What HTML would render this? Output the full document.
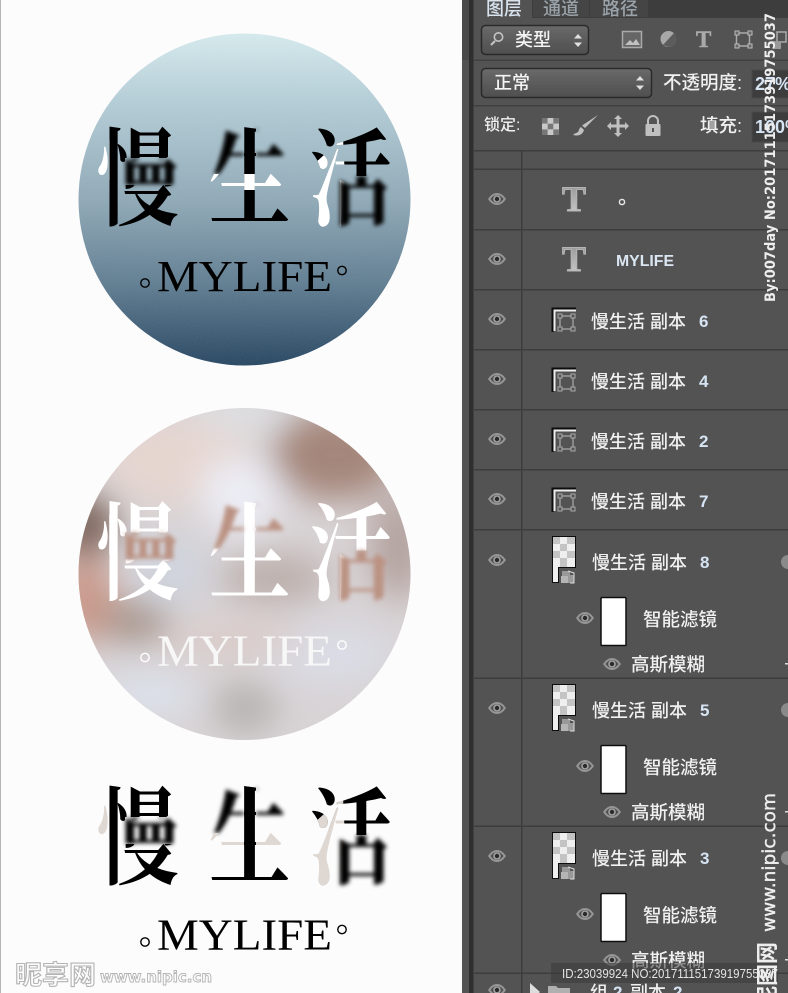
<!DOCTYPE html>
<html lang="zh">
<head>
<meta charset="utf-8">
<title>慢生活 MYLIFE</title>
<style>
html,body{margin:0;padding:0;background:#fcfcfc;width:788px;height:993px;overflow:hidden}
svg{display:block}
.cn{font-family:"Liberation Serif","Noto Serif CJK SC",serif;font-weight:700;font-size:106px}
.en{font-family:"Liberation Serif",serif;font-size:44px}
.ui{font-family:"Liberation Sans","Noto Sans CJK SC",sans-serif;font-size:18px;font-weight:500;fill:#f0f0f0}
.num{font-family:"Liberation Sans",sans-serif;font-size:17px;font-weight:700;fill:#d5e3f2}
.wm{font-family:"DejaVu Sans",sans-serif;font-weight:700;fill:#eee}
</style>
</head>
<body>
<svg width="788" height="993" viewBox="0 0 788 993" xmlns="http://www.w3.org/2000/svg">
<defs>
<linearGradient id="g1" x1="0" y1="0" x2="0" y2="1">
<stop offset="0" stop-color="#d8eef1"/><stop offset=".2" stop-color="#b6d0da"/><stop offset=".5" stop-color="#8faab8"/><stop offset=".75" stop-color="#5f7d92"/><stop offset="1" stop-color="#234360"/>
</linearGradient>
<linearGradient id="sel" x1="0" y1="0" x2="0" y2="1"><stop offset="0" stop-color="#6a6a6a"/><stop offset="1" stop-color="#4e4e4e"/></linearGradient>
<linearGradient id="tg" x1="0" y1="0" x2="0" y2="1"><stop offset="0" stop-color="#8f8f8f"/><stop offset="1" stop-color="#d0d0d0"/></linearGradient>
<filter id="b2" x="-30%" y="-30%" width="160%" height="160%"><feGaussianBlur stdDeviation="2"/></filter>
<filter id="bg" x="-60%" y="-60%" width="220%" height="220%"><feGaussianBlur stdDeviation="17"/></filter>
<filter id="soft" x="-5%" y="-5%" width="110%" height="110%"><feGaussianBlur stdDeviation=".35"/></filter>
<filter id="noise" x="0" y="0" width="100%" height="100%"><feTurbulence type="fractalNoise" baseFrequency=".9" numOctaves="2"/><feColorMatrix values="0 0 0 0 .5 0 0 0 0 .5 0 0 0 0 .5 0 0 0 .35 0"/></filter>
<clipPath id="cc1"><circle cx="244.5" cy="199.5" r="166"/></clipPath>
<clipPath id="cc2"><circle cx="244.5" cy="574" r="166"/></clipPath>

<clipPath id="mA"><rect x="90" y="140" width="19.5" height="40"/></clipPath>
<clipPath id="mS"><path d="M109.5 120H182V158H125V185H182V232H109.5Z"/></clipPath>
<clipPath id="mB"><rect x="125" y="158" width="57" height="27"/></clipPath>
<clipPath id="sB"><path d="M200 120H244V174H200ZM256 120H296V174H256Z"/></clipPath>
<clipPath id="sS"><path d="M244 120H256V190H296V232H200V190H244Z"/></clipPath>
<clipPath id="sA"><rect x="200" y="174" width="96" height="16"/></clipPath>
<clipPath id="sV"><rect x="244" y="120" width="12" height="110"/></clipPath>
<clipPath id="hS"><path d="M305 120H341L341 143L326 176L305 176ZM341 120H396V176H341Z"/></clipPath>
<clipPath id="hA"><path d="M343 138L345 178L340 232H305V172Z"/></clipPath>
<clipPath id="hB"><rect x="339" y="176" width="56" height="54"/></clipPath>

<symbol id="eye" viewBox="0 0 20 14"><path d="M1 7C4 2.5 7 1 10 1s6 1.500 9 6c-3 4.500-6 6-9 6S4 11.500 1 7Z" fill="#969696"/><path d="M3.500 7C5.500 4 8 3 10 3s4.500 1 6.500 4c-2 3-4.500 4-6.500 4s-4.500-1-6.500-4Z" fill="#505050"/><circle cx="10" cy="7" r="3.800" fill="#a2a2a2"/><circle cx="10" cy="7" r="2.200" fill="#2c2c2c"/></symbol>
<symbol id="shape" viewBox="0 0 26 26"><path d="M1.500 25V1.500H25" fill="none" stroke="#111" stroke-width="2"/><path d="M3.500 24V3.500H25" fill="none" stroke="#eee" stroke-width="2"/><rect x="9" y="9" width="13" height="13" fill="none" stroke="#999" stroke-width="1.500"/><g fill="#555" stroke="#aaa"><rect x="7" y="7" width="4" height="4"/><rect x="20" y="7" width="4" height="4"/><rect x="7" y="20" width="4" height="4"/><rect x="20" y="20" width="4" height="4"/></g></symbol>
<symbol id="smart" viewBox="0 0 26 49"><path d="M1 1H25V33H8V48H1Z" fill="#111"/><rect x="2" y="2" width="22" height="30" fill="#efefef"/><rect x="2" y="32" width="5" height="15" fill="#efefef"/><g fill="#c4c4c4"><rect x="2" y="2" width="7" height="7"/><rect x="16" y="2" width="8" height="7"/><rect x="9" y="9" width="7" height="7"/><rect x="2" y="16" width="7" height="7"/><rect x="16" y="16" width="8" height="7"/><rect x="9" y="23" width="7" height="9"/></g><path d="M11 36h8v4h4v8h-10v-4h-2z" fill="#999"/><path d="M17 36l6 2v10h-4" fill="none" stroke="#ddd" stroke-width="1"/><rect x="10" y="41" width="7" height="7" fill="#b5b5b5"/></symbol>
</defs>

<!-- left page -->
<rect width="788" height="993" fill="#fcfcfc"/>
<rect x="0" y="0" width="1" height="993" fill="#b5b5b5"/>

<!-- circle 1 -->
<circle cx="244.5" cy="199.5" r="166" fill="url(#g1)"/>
<g clip-path="url(#cc1)"><rect x="78" y="33" width="334" height="334" filter="url(#noise)" opacity=".45"/></g>

<!-- logo 1 -->
<g>
<g clip-path="url(#mS)"><text class="cn" transform="translate(97,217) scale(.77,1)">慢</text></g>
<g clip-path="url(#mA)"><text class="cn" fill="#fff" transform="translate(97,217) scale(.77,1)">慢</text></g>
<g filter="url(#b2)"><g clip-path="url(#mB)"><text class="cn" transform="translate(97,217) scale(.77,1)">慢</text></g></g>
<g filter="url(#b2)"><g clip-path="url(#sB)"><text class="cn" transform="translate(209,217) scale(.77,1)">生</text></g></g>
<g clip-path="url(#sS)"><text class="cn" transform="translate(209,217) scale(.77,1)">生</text></g>
<g clip-path="url(#sA)"><text class="cn" fill="#fff" transform="translate(209,217) scale(.77,1)">生</text></g>
<g clip-path="url(#hS)"><text class="cn" transform="translate(310,217) scale(.77,1)">活</text></g>
<g clip-path="url(#hA)"><text class="cn" fill="#fff" transform="translate(310,217) scale(.77,1)">活</text></g>
<g filter="url(#b2)"><g clip-path="url(#hB)"><text class="cn" transform="translate(310,217) scale(.77,1)">活</text></g></g>
<text class="en" x="157" y="291" textLength="175" lengthAdjust="spacingAndGlyphs">MYLIFE</text>
<circle cx="145" cy="283" r="4.200" fill="none" stroke="#000" stroke-width="1.400"/>
<circle cx="342" cy="270.500" r="4.200" fill="none" stroke="#000" stroke-width="1.400"/>
</g>

<!-- circle 2 -->
<circle cx="244.5" cy="574" r="166" fill="#d8d3d5"/>
<g clip-path="url(#cc2)">
<g filter="url(#bg)">
<ellipse cx="335" cy="455" rx="62" ry="45" fill="#a4867a"/>
<ellipse cx="180" cy="462" rx="75" ry="42" fill="#e6d6d0"/>
<ellipse cx="240" cy="495" rx="40" ry="38" fill="#ecedf5"/>
<ellipse cx="85" cy="525" rx="32" ry="32" fill="#7a6258"/>
<ellipse cx="85" cy="600" rx="32" ry="42" fill="#cb9a8b"/>
<ellipse cx="135" cy="622" rx="34" ry="20" fill="#a49288"/>
<ellipse cx="245" cy="708" rx="32" ry="24" fill="#b4b0ad"/>
<ellipse cx="150" cy="695" rx="50" ry="24" fill="#dce1ea"/>
<ellipse cx="398" cy="545" rx="28" ry="55" fill="#b3a29e"/>
<ellipse cx="330" cy="655" rx="65" ry="30" fill="#dadce5"/>
<ellipse cx="275" cy="578" rx="55" ry="24" fill="#bbaeaa"/>
<ellipse cx="170" cy="570" rx="40" ry="35" fill="#d0d4dd"/>
<ellipse cx="240" cy="415" rx="50" ry="12" fill="#dfe4e8"/>
<ellipse cx="235" cy="640" rx="70" ry="12" fill="#dcc9c4"/>
</g>
</g>

<!-- logo 2 -->
<g transform="translate(0,374.500)">
<g fill="#fff">
<g clip-path="url(#mS)"><text class="cn" transform="translate(97,217) scale(.77,1)">慢</text></g>
<g clip-path="url(#mA)"><text class="cn" transform="translate(97,217) scale(.77,1)">慢</text></g>
<g clip-path="url(#sS)"><text class="cn" transform="translate(209,217) scale(.77,1)">生</text></g>
<g clip-path="url(#sA)"><text class="cn" transform="translate(209,217) scale(.77,1)">生</text></g>
<g clip-path="url(#hS)"><text class="cn" transform="translate(310,217) scale(.77,1)">活</text></g>
<g clip-path="url(#hA)"><text class="cn" transform="translate(310,217) scale(.77,1)">活</text></g>
</g>
<g fill="#bb9383" filter="url(#b2)">
<g clip-path="url(#mB)"><text class="cn" transform="translate(97,217) scale(.77,1)">慢</text></g>
<g clip-path="url(#sB)"><text class="cn" transform="translate(209,217) scale(.77,1)">生</text></g>
<g clip-path="url(#hB)"><text class="cn" transform="translate(310,217) scale(.77,1)">活</text></g>
</g>
<text class="en" fill="#f7f7f7" x="157" y="291" textLength="175" lengthAdjust="spacingAndGlyphs">MYLIFE</text>
<circle cx="145" cy="283" r="4.200" fill="none" stroke="#fff" stroke-width="1.400"/>
<circle cx="342" cy="270.500" r="4.200" fill="none" stroke="#fff" stroke-width="1.400"/>
</g>

<!-- logo 3 -->
<g transform="translate(0,659)">
<g clip-path="url(#mS)"><text class="cn" transform="translate(97,217) scale(.77,1)">慢</text></g>
<g clip-path="url(#mA)"><text class="cn" fill="#dfd8d2" transform="translate(97,217) scale(.77,1)">慢</text></g>
<g filter="url(#b2)"><g clip-path="url(#mB)"><text class="cn" transform="translate(97,217) scale(.77,1)">慢</text></g></g>
<g filter="url(#b2)"><g clip-path="url(#sB)"><text class="cn" transform="translate(209,217) scale(.77,1)">生</text></g></g>
<g clip-path="url(#sA)"><text class="cn" fill="#dfd8d2" transform="translate(209,217) scale(.77,1)">生</text></g>
<g clip-path="url(#sS)"><text class="cn" transform="translate(209,217) scale(.77,1)">生</text></g>
<g clip-path="url(#sV)"><text class="cn" transform="translate(209,217) scale(.77,1)">生</text></g>
<g clip-path="url(#hS)"><text class="cn" transform="translate(310,217) scale(.77,1)">活</text></g>
<g clip-path="url(#hA)"><text class="cn" fill="#dfd8d2" transform="translate(310,217) scale(.77,1)">活</text></g>
<g filter="url(#b2)"><g clip-path="url(#hB)"><text class="cn" transform="translate(310,217) scale(.77,1)">活</text></g></g>
<text class="en" x="157" y="291" textLength="175" lengthAdjust="spacingAndGlyphs" transform="translate(0,-0.500)">MYLIFE</text>
<circle cx="145" cy="283" r="4.200" fill="none" stroke="#000" stroke-width="1.400"/>
<circle cx="342" cy="270.500" r="4.200" fill="none" stroke="#000" stroke-width="1.400"/>
</g>

<!-- nipic watermark -->
<text x="15" y="984" font-family="'Liberation Sans','Noto Sans CJK SC',sans-serif" font-size="26" font-weight="700" fill="#fdfdfd" stroke="#b4b4b4" stroke-width="1.100" textLength="81" lengthAdjust="spacingAndGlyphs">昵享网</text>
<text x="100" y="982" font-family="'DejaVu Sans',sans-serif" font-size="15" font-weight="700" fill="#fdfdfd" stroke="#b4b4b4" stroke-width=".9" textLength="112" lengthAdjust="spacingAndGlyphs">www.nipic.cn</text>

<!-- right panel -->
<rect x="462" y="0" width="326" height="993" fill="#535353"/>
<rect x="469" y="0" width="4.500" height="993" fill="#2f2f2f"/>
<rect x="462" y="0" width="7" height="60" fill="#4a4a4a"/>

<g filter="url(#soft)">
<!-- tabs -->
<rect x="474" y="0" width="314" height="18" fill="#3d3d3d"/>
<rect x="474" y="0" width="58" height="18" fill="#535353"/>
<rect x="533" y="0" width="56" height="17" fill="#454545"/>
<rect x="590" y="0" width="58" height="17" fill="#454545"/>
<text class="ui" x="486" y="15" style="fill:#d8e3ee">图层</text>
<text class="ui" x="543" y="15" style="fill:#9aa3aa">通道</text>
<text class="ui" x="602" y="15" style="fill:#9aa3aa">路径</text>

<!-- filter row -->
<rect x="481.500" y="25.500" width="107" height="29" rx="4" fill="url(#sel)" stroke="#2c2c2c" stroke-width="1.500"/>
<circle cx="498.500" cy="37" r="4.200" fill="none" stroke="#c4c4c4" stroke-width="1.600"/>
<path d="M495 41l-4 4" stroke="#c4c4c4" stroke-width="2"/>
<text class="ui" x="515" y="46" style="fill:#f4f4f4">类型</text>
<path d="M578 34l4 4.500h-8ZM578 47l4-4.500h-8Z" fill="#e0e0e0"/>
<rect x="622.500" y="31.500" width="19" height="16" fill="#666" stroke="#aaa" stroke-width="1.500"/>
<path d="M625 45l5-5 3 3 3-4 4 6Z" fill="#c0c0c0"/>
<circle cx="668.500" cy="39" r="8" fill="#a8a8a8"/>
<path d="M663 45L674 33a8 8 0 0 1-5.500 14Z" fill="#5c5c5c"/>
<text x="696" y="47" font-family="'Liberation Serif',serif" font-weight="700" font-size="23" fill="#aaa" stroke="#aaa" stroke-width=".5">T</text>
<rect x="736.500" y="33" width="13" height="13" fill="none" stroke="#aaa" stroke-width="1.500"/>
<g fill="#666" stroke="#bbb"><rect x="735" y="31" width="4" height="4"/><rect x="748" y="31" width="4" height="4"/><rect x="735" y="44" width="4" height="4"/><rect x="748" y="44" width="4" height="4"/></g>
<path d="M777 32h9v10h-9Z" fill="none" stroke="#aaa" stroke-width="1.500"/>
<rect x="773" y="41" width="8" height="8" fill="#999"/>

<rect x="474" y="59.500" width="314" height="1.500" fill="#3f3f3f"/>

<!-- blend row -->
<rect x="481.500" y="68.500" width="170" height="29" rx="4" fill="url(#sel)" stroke="#2c2c2c" stroke-width="1.500"/>
<text class="ui" x="494" y="89" style="fill:#f4f4f4">正常</text>
<path d="M640 76l4 4.500h-8ZM640 90l4-4.500h-8Z" fill="#e0e0e0"/>
<text class="ui" x="663" y="89" style="font-size:18.500px">不透明度:</text>
<rect x="752" y="70" width="40" height="28" fill="#3d3d3d" stroke="#4a4a4a"/>
<text class="num" x="755" y="90" style="font-size:18px">27%</text>

<rect x="474" y="105" width="314" height="1.500" fill="#3f3f3f"/>

<!-- lock row -->
<text class="ui" x="484" y="130" style="font-size:16px">锁定:</text>
<rect x="542" y="118" width="17" height="17" fill="#c8c8c8"/>
<g fill="#777"><rect x="542" y="118" width="5.600" height="5.600"/><rect x="553.300" y="118" width="5.600" height="5.600"/><rect x="547.700" y="123.700" width="5.600" height="5.600"/><rect x="542" y="129.400" width="5.600" height="5.600"/><rect x="553.300" y="129.400" width="5.600" height="5.600"/></g>
<path d="M598 115L585 128l-3-2.500ZM581 127c-2 1-2 4-3 5-1 1-3 1-5 3 4 1 9 1 11-5Z" fill="#c0c0c0"/>
<path d="M618 116l4 4h-2.500v5.500H625V123l4 4-4 4v-2.500h-5.500V134H622l-4 4-4-4h2.500v-5.500H611V131l-4-4 4-4v2.500h5.500V120H614Z" fill="#c0c0c0" transform="translate(0,-1)"/>
<path d="M648 124v-3a5 5 0 0 1 10 0v3" fill="none" stroke="#c0c0c0" stroke-width="2"/>
<rect x="645.500" y="124" width="15" height="12" rx="1" fill="#c0c0c0"/>
<rect x="652" y="128" width="2" height="4" fill="#555"/>
<text class="ui" x="700" y="132" style="font-size:18.500px">填充:</text>
<rect x="752" y="112" width="40" height="30" fill="#3d3d3d" stroke="#4a4a4a"/>
<text class="num" x="755" y="133" style="font-size:18px">100%</text>

<!-- row lines -->
<g fill="#3c3c3c">
<rect x="474" y="150" width="314" height="1.500"/>
<rect x="474" y="168.500" width="314" height="1.500"/>
<rect x="474" y="229" width="314" height="1.500"/>
<rect x="474" y="289" width="314" height="1.500"/>
<rect x="474" y="349" width="314" height="1.500"/>
<rect x="474" y="409" width="314" height="1.500"/>
<rect x="474" y="469" width="314" height="1.500"/>
<rect x="474" y="529" width="314" height="1.500"/>
<rect x="474" y="677.500" width="314" height="1.500"/>
<rect x="474" y="825.500" width="314" height="1.500"/>
<rect x="474" y="972.500" width="314" height="1.500"/>
<rect x="521" y="150" width="1.500" height="843"/>
</g>

<!-- eyes -->
<use href="#eye" x="487" y="192" width="20" height="14"/>
<use href="#eye" x="487" y="252" width="20" height="14"/>
<use href="#eye" x="487" y="312" width="20" height="14"/>
<use href="#eye" x="487" y="372" width="20" height="14"/>
<use href="#eye" x="487" y="432" width="20" height="14"/>
<use href="#eye" x="487" y="492" width="20" height="14"/>
<use href="#eye" x="487" y="553" width="20" height="14"/>
<use href="#eye" x="487" y="701" width="20" height="14"/>
<use href="#eye" x="487" y="849" width="20" height="14"/>
<use href="#eye" x="487" y="983" width="20" height="14"/>
<use href="#eye" x="575" y="611" width="20" height="14"/>
<use href="#eye" x="575" y="759" width="20" height="14"/>
<use href="#eye" x="575" y="907" width="20" height="14"/>
<use href="#eye" x="602" y="657" width="20" height="14"/>
<use href="#eye" x="602" y="805" width="20" height="14"/>
<use href="#eye" x="602" y="953" width="20" height="14"/>

<!-- type layers -->
<text x="562" y="211" font-family="'Liberation Serif',serif" font-weight="700" font-size="36" fill="url(#tg)" stroke="#b4b4b4" stroke-width="1" textLength="24" lengthAdjust="spacingAndGlyphs">T</text>
<text x="562" y="271" font-family="'Liberation Serif',serif" font-weight="700" font-size="36" fill="url(#tg)" stroke="#b4b4b4" stroke-width="1" textLength="24" lengthAdjust="spacingAndGlyphs">T</text>
<circle cx="622" cy="202" r="2.600" fill="none" stroke="#e8e8e8" stroke-width="1.400"/>
<text x="616" y="266" font-family="'Liberation Sans',sans-serif" font-size="16" font-weight="700" fill="#dbe6f3" textLength="58" lengthAdjust="spacingAndGlyphs">MYLIFE</text>

<!-- shape layers -->
<use href="#shape" x="551" y="307" width="26" height="26"/>
<use href="#shape" x="551" y="367" width="26" height="26"/>
<use href="#shape" x="551" y="427" width="26" height="26"/>
<use href="#shape" x="551" y="487" width="26" height="26"/>
<text class="ui" x="591" y="328">慢生活 副本</text><text class="num" x="699" y="327">6</text>
<text class="ui" x="591" y="388">慢生活 副本</text><text class="num" x="699" y="387">4</text>
<text class="ui" x="591" y="448">慢生活 副本</text><text class="num" x="699" y="447">2</text>
<text class="ui" x="591" y="508">慢生活 副本</text><text class="num" x="699" y="507">7</text>

<!-- smart objects -->
<use href="#smart" x="551" y="535" width="26" height="49"/>
<use href="#smart" x="551" y="683" width="26" height="49"/>
<use href="#smart" x="551" y="831" width="26" height="49"/>
<text class="ui" x="592" y="569">慢生活 副本</text><text class="num" x="700" y="568">8</text>
<text class="ui" x="592" y="717">慢生活 副本</text><text class="num" x="700" y="716">5</text>
<text class="ui" x="592" y="865">慢生活 副本</text><text class="num" x="700" y="864">3</text>

<g fill="#fff" stroke="#111" stroke-width="1.500">
<rect x="601" y="597.500" width="25" height="48" rx="1"/>
<rect x="601" y="745.500" width="25" height="48" rx="1"/>
<rect x="601" y="893.500" width="25" height="48" rx="1"/>
</g>
<text class="ui" x="643" y="626" style="font-size:18.500px">智能滤镜</text>
<text class="ui" x="643" y="774" style="font-size:18.500px">智能滤镜</text>
<text class="ui" x="643" y="922" style="font-size:18.500px">智能滤镜</text>
<text class="ui" x="631" y="671" style="font-size:18.500px">高斯模糊</text>
<text class="ui" x="631" y="819" style="font-size:18.500px">高斯模糊</text>
<text class="ui" x="631" y="967" style="font-size:18.500px">高斯模糊</text>

<g fill="#8a8a8a">
<circle cx="788" cy="562" r="7"/><circle cx="788" cy="710" r="7"/><circle cx="788" cy="858" r="7"/>
</g>
<g fill="#ddd"><rect x="785" y="663" width="3" height="1.500"/><rect x="785" y="811" width="3" height="1.500"/><rect x="785" y="959" width="3" height="1.500"/></g>

<!-- bottom group -->
<path d="M530 983l10 9-10 9Z" fill="#ddd"/>
<path d="M548 986h8l2 2h12v12h-22Z" fill="#b0b0b0"/>
<text class="ui" x="590" y="999">组</text><text class="num" x="613" y="998">2</text><text class="ui" x="630" y="999">副本</text><text class="num" x="673" y="998">2</text>
</g>

<!-- overlay watermarks -->
<rect x="551" y="963" width="227" height="20" fill="#3a3a3a" opacity=".55"/>
<text x="562" y="978" font-family="'Liberation Sans',sans-serif" font-size="12.500" fill="#e4e4e4" textLength="216" lengthAdjust="spacingAndGlyphs">ID:23039924 NO:20171115173919755037</text>
<text class="wm" font-size="14.500" transform="translate(775,302) rotate(-90)" textLength="289" lengthAdjust="spacingAndGlyphs">By:007day No:20171115173919755037</text>
<text class="wm" font-size="18" stroke="#eee" stroke-width=".4" style="font-weight:400" transform="translate(775,932) rotate(-90)" textLength="139" lengthAdjust="spacingAndGlyphs">www.nipic.com</text>
<text transform="translate(775,1008) rotate(-90)" font-family="'Liberation Sans','Noto Sans CJK SC',sans-serif" font-size="22" font-weight="700" fill="#eee">昵图网</text>
</svg>
</body>
</html>
